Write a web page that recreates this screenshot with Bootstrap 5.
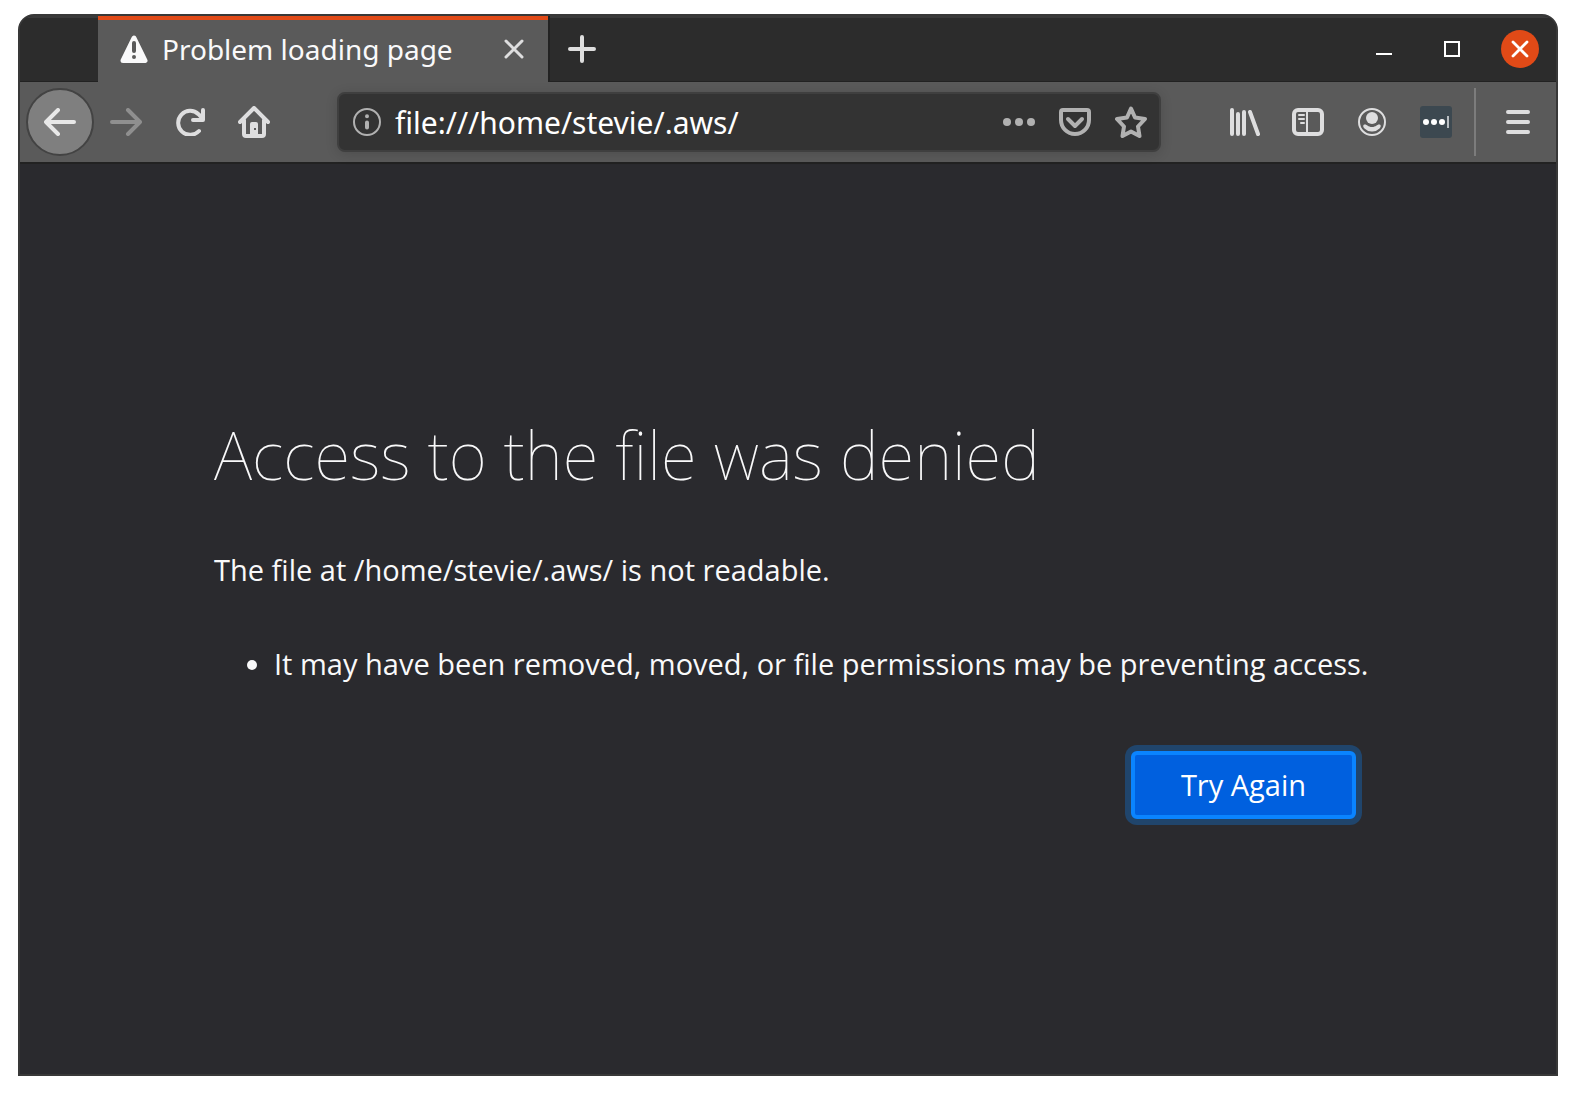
<!DOCTYPE html>
<html lang="en">
<head>
<meta charset="utf-8">
<meta name="viewport" content="width=device-width, initial-scale=1">
<title>Problem loading page</title>
<link rel="stylesheet" href="https://cdn.jsdelivr.net/npm/bootstrap@5.3.0/dist/css/bootstrap.min.css">
<style>
  body { background: #fff; color: #f9f9fa; font-family: "Open Sans", "Noto Sans", sans-serif; font-size: 29px; line-height: 40px; }
  button { border: 0; background: none; padding: 0; color: #dededf; }
  svg { display: block; fill: none; stroke: currentColor; stroke-width: 4; stroke-linecap: round; stroke-linejoin: round; }
  .page-shell { min-height: 100vh; padding: 14px 18px 18px; }
  .app-window { border: 2px solid #383838; border-radius: 16px 16px 0 0; background: #2a2a2e; }
  .title-strip { height: 66px; background: #2c2c2c; border-bottom: 1px solid #222; box-shadow: inset 0 2px #3a3a3a; padding: 0 2px 0 78px; }
  .page-tab { width: 450px; height: 66px; background: #5a5a5a; border-top: 4px solid #e14a17; box-shadow: 2px 0 #222; padding: 0 24px 4px 22px; font-family: "Noto Sans", sans-serif; font-size: 28px; }
  .tab-label { margin-left: 14px; }
  .win-btn { width: 68px; height: 66px; color: #fff; }
  .new-tab { color: #dedede; }
  .tool-strip { height: 82px; background: #5a5a5a; border-bottom: 2px solid #222; padding: 0 6px; }
  .tool-btn { width: 64px; height: 68px; }
  .back-btn { width: 68px; height: 68px; background: #7f7f7f; border: 2px solid #434343; border-radius: 50%; color: #e8e8e8; }
  .forward-btn { color: #8f8f8f; }
  .url-box { height: 60px; margin: 0 51px; background: #333; border: 2px solid #3f3f3f; border-radius: 8px; box-shadow: 0 2px 12px rgba(0,0,0,.15); }
  .url-btn { width: 56px; height: 56px; color: #b1b1b1; }
  .url-input { min-width: 0; border: 0; padding: 2px 0 0; background: none; color: #fff; font-family: "Noto Sans", sans-serif; font-size: 30px; outline: 0; }
  .tool-rule { width: 2px; height: 68px; margin: 0 10px 0 6px; background: #7c7c7c; }
  .error-text { width: 1148px; max-width: 100%; }
  .error-title { font-family: "Noto Sans", sans-serif; font-weight: 100; font-size: 66px; line-height: 80px; margin: 0 0 56px; }
  .error-lead { margin: 0 0 54px; }
  .error-list { margin: 0 -16px 61px 0; padding-left: 60px; }
  .retry-btn { width: 225px; height: 68px; margin: 6px; background: #0060df; border: 4px solid #0a84ff; border-radius: 6px; box-shadow: 0 0 0 6px #20456c; color: #fff; }
</style>
<script src="https://cdn.jsdelivr.net/npm/bootstrap@5.3.0/dist/js/bootstrap.bundle.min.js"></script>
</head>
<body>
<div class="page-shell d-flex">
  <div class="app-window d-flex flex-column flex-grow-1 overflow-hidden">
    <header class="title-strip d-flex align-items-start flex-shrink-0">
      <div class="page-tab d-flex align-items-center">
        <svg width="28" height="28" viewBox="0 0 28 28"><path d="M14 3 25 25.500H3Z" fill="#f9f9fa" stroke="#f9f9fa" stroke-width="5"/><path d="M14 8v8M14 22v.01" stroke="#5a5a5a"/></svg>
        <span class="tab-label flex-grow-1 text-nowrap">Problem loading page</span>
        <button type="button" aria-label="Close tab"><svg width="20" height="20" viewBox="0 0 20 20"><path d="M2 2 18 18M18 2 2 18" stroke-width="3"/></svg></button>
      </div>
      <button type="button" class="win-btn new-tab d-flex align-items-center justify-content-center" aria-label="New tab"><svg width="28" height="28" viewBox="0 0 28 28"><path d="M14 2v24M2 14h24"/></svg></button>
      <div class="ms-auto d-flex">
        <button type="button" class="win-btn d-flex align-items-center justify-content-center" aria-label="Minimise"><svg width="16" height="16" viewBox="0 0 16 16"><path d="M0 13h16" stroke-width="2" stroke-linecap="butt"/></svg></button>
        <button type="button" class="win-btn d-flex align-items-center justify-content-center" aria-label="Maximise"><svg width="16" height="16" viewBox="0 0 16 16"><path d="M1 1h14v14H1Z" stroke-width="2" stroke-linejoin="miter"/></svg></button>
        <button type="button" class="win-btn d-flex align-items-center justify-content-center" aria-label="Close window"><svg width="38" height="38" viewBox="0 0 38 38"><circle cx="19" cy="19" r="19" fill="#e14a17" stroke="none"/><path d="M12 12l14 14M26 12 12 26" stroke-width="2.800"/></svg></button>
      </div>
    </header>

    <nav class="tool-strip d-flex align-items-center flex-shrink-0" aria-label="Browser toolbar">
      <button type="button" class="back-btn d-flex align-items-center justify-content-center flex-shrink-0" aria-label="Back"><svg width="32" height="28" viewBox="0 0 32 28"><path d="M14 2 2 14 14 26M2 14h28"/></svg></button>
      <button type="button" class="tool-btn forward-btn d-flex align-items-center justify-content-center" aria-label="Forward"><svg width="32" height="28" viewBox="0 0 32 28"><path d="M18 2 30 14 18 26M30 14H2"/></svg></button>
      <button type="button" class="tool-btn d-flex align-items-center justify-content-center" aria-label="Reload"><svg width="32" height="28" viewBox="0 0 32 28"><path d="M25 23A12 12 0 1 1 24.500 6.200L28 10M29 2v10H19"/></svg></button>
      <button type="button" class="tool-btn d-flex align-items-center justify-content-center" aria-label="Home"><svg width="32" height="32" viewBox="0 0 32 32"><path d="M2 16 16 2 30 16M6 14v14a2 2 0 0 0 2 2h16a2 2 0 0 0 2-2V14"/><path d="M12 30V18a2 2 0 0 1 2-2h4a2 2 0 0 1 2 2v12Z" fill="currentColor" stroke="none"/><path d="M16 22h2v2h-2Z" fill="#5a5a5a" stroke="none"/></svg></button>
      <div class="url-box d-flex align-items-center flex-grow-1">
        <button type="button" class="url-btn d-flex align-items-center justify-content-center flex-shrink-0" aria-label="Site information"><svg width="28" height="28" viewBox="0 0 28 28"><circle cx="14" cy="14" r="13" stroke-width="2"/><path d="M14 14.500v5M14 8.200v.01"/></svg></button>
        <input class="url-input flex-grow-1" type="text" aria-label="Address" value="file:///home/stevie/.aws/">
        <button type="button" class="url-btn d-flex align-items-center justify-content-center flex-shrink-0" aria-label="Page actions"><svg width="32" height="8" viewBox="0 0 32 8"><g fill="currentColor" stroke="none"><circle cx="4" cy="4" r="4"/><circle cx="16" cy="4" r="4"/><circle cx="28" cy="4" r="4"/></g></svg></button>
        <button type="button" class="url-btn d-flex align-items-center justify-content-center flex-shrink-0" aria-label="Save to Pocket"><svg width="32" height="28" viewBox="0 0 32 28"><path d="M4 2h24a2 2 0 0 1 2 2v8a14 14 0 0 1-28 0V4a2 2 0 0 1 2-2ZM9 11l7 7 7-7"/></svg></button>
        <button type="button" class="url-btn d-flex align-items-center justify-content-center flex-shrink-0" aria-label="Bookmark this page"><svg width="32" height="32" viewBox="0 0 32 32"><path d="M16 2.500 20 11.500 30 13 23 20.500 24.500 30 16 25.500 7.500 30 9 20.500 2 13 12 11.500Z"/></svg></button>
      </div>
      <button type="button" class="tool-btn d-flex align-items-center justify-content-center" aria-label="Library"><svg width="32" height="28" viewBox="0 0 32 28"><path d="M4 2v24M10 6v20M16 4v22M22 4 30 26"/></svg></button>
      <button type="button" class="tool-btn d-flex align-items-center justify-content-center" aria-label="Sidebars"><svg width="32" height="28" viewBox="0 0 32 28"><rect x="2" y="2" width="28" height="24" rx="4"/><path d="M15 3v22M7 7h5M7 11h5M9 15h3" stroke-width="2"/></svg></button>
      <button type="button" class="tool-btn d-flex align-items-center justify-content-center" aria-label="Account"><svg width="28" height="28" viewBox="0 0 28 28"><circle cx="14" cy="14" r="13" stroke-width="2"/><g fill="currentColor" stroke="none"><circle cx="14" cy="10" r="6"/><path d="M7 16.500C9 16.500 10 19 14 19s5-2.500 7-2.500 2.500 2 .5 4A10 10 0 0 1 14 23.500a10 10 0 0 1-7.500-3c-2-2-1.500-4 .5-4Z"/></g></svg></button>
      <button type="button" class="tool-btn d-flex align-items-center justify-content-center" aria-label="Password manager"><svg width="32" height="32" viewBox="0 0 32 32"><rect width="32" height="32" rx="3" fill="#3c4850" stroke="none"/><g fill="#fff" stroke="none"><circle cx="6" cy="16" r="3"/><circle cx="14" cy="16" r="3"/><circle cx="22" cy="16" r="3"/><path d="M27 10h2v12h-2Z" fill="#b9bec2"/></g></svg></button>
      <span class="tool-rule flex-shrink-0"></span>
      <button type="button" class="tool-btn d-flex align-items-center justify-content-center" aria-label="Menu"><svg width="24" height="24" viewBox="0 0 24 24"><path d="M2 2h20M2 12h20M2 22h20"/></svg></button>
    </nav>

    <main class="flex-grow-1 d-flex flex-column align-items-center justify-content-center">
      <div class="error-text">
        <h1 class="error-title">Access to the file was denied</h1>
        <p class="error-lead">The file at /home/stevie/.aws/ is not readable.</p>
        <ul class="error-list"><li>It may have been removed, moved, or file permissions may be preventing access.</li></ul>
        <div class="d-flex justify-content-end"><button type="button" class="retry-btn">Try Again</button></div>
      </div>
    </main>
  </div>
</div>
</body>
</html>
